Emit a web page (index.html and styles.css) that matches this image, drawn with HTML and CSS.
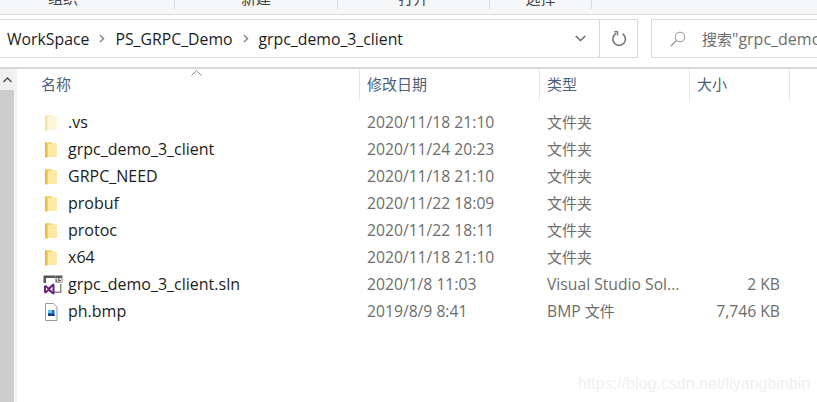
FILE: index.html
```html
<!DOCTYPE html>
<html lang="zh">
<head>
  <meta charset="UTF-8" />
  <title>grpc_demo_3_client</title>
  <link rel="stylesheet" href="styles.css">
</head>
<body>
  <svg class="defs" width="0" height="0">
    <symbol id="folder" viewBox="0 0 14 18">
      <path d="M1 1h6l1.5 1.500H13V16H1z" fill="#f6d873"/>
      <path d="M3.500 3H13v13H3.500z" fill="#fbe9a6"/>
      <path d="M1 1v15.500h2.500V3z" fill="#eeb93f"/>
    </symbol>
    <symbol id="folder-faded" viewBox="0 0 14 18">
      <path d="M1 1h6l1.500 1.500H13V16H1z" fill="#fbeec0"/>
      <path d="M3.500 3H13v13H3.500z" fill="#fdf6dc"/>
      <path d="M1 1v15.500h2.500V3z" fill="#f8e3a8"/>
    </symbol>
  </svg>

  <div class="ribbon">
    <div class="ribbon__group ribbon__group--first"><span>组织</span></div>
    <div class="ribbon__group ribbon__group--new"><span>新建</span></div>
    <div class="ribbon__group ribbon__group--open"><span>打开</span></div>
    <div class="ribbon__group ribbon__group--select"><span>选择</span></div>
  </div>

  <div class="navbar">
    <div class="address">
      <div class="crumbs">
        <span>WorkSpace</span>
        <svg class="crumbs__sep" width="6" height="9" viewBox="0 0 6 9"><path d="M1 1l3.500 3.500L1 8" fill="none" stroke="#8a8a8a" stroke-width="1.500"/></svg>
        <span>PS_GRPC_Demo</span>
        <svg class="crumbs__sep" width="6" height="9" viewBox="0 0 6 9"><path d="M1 1l3.500 3.500L1 8" fill="none" stroke="#8a8a8a" stroke-width="1.500"/></svg>
        <span>grpc_demo_3_client</span>
      </div>
      <div class="address__drop">
        <svg width="11" height="7" viewBox="0 0 11 7"><path d="M.7 1l4.800 4.500L10.300 1" fill="none" stroke="#6d6d6d" stroke-width="1.600"/></svg>
      </div>
      <div class="address__refresh">
        <svg width="16" height="16" viewBox="0 0 16 16"><path d="M5 2.600A6.300 6.300 0 1 0 11.600 2.800" fill="none" stroke="#7d7d7d" stroke-width="1.700"/><path d="M3.200 .8h3.300v3.600" fill="none" stroke="#7d7d7d" stroke-width="1.500"/></svg>
      </div>
    </div>
    <div class="search">
      <svg class="search__icon" width="16" height="16" viewBox="0 0 16 16"><circle cx="10" cy="6" r="4.800" fill="none" stroke="#8f8f8f"/><path d="M6.500 9.500L1 15" stroke="#8f8f8f" stroke-width="1.200"/></svg>
      <span class="search__text"><span class="cjk">搜索</span>"grpc_demo_3_client"</span>
    </div>
  </div>

  <div class="explorer">
    <div class="scrollbar">
      <div class="scrollbar__up">
        <svg width="9" height="6" viewBox="0 0 9 6"><path d="M.5 5l4-4 4 4" fill="none" stroke="#505050" stroke-width="1.500"/></svg>
      </div>
    </div>
    <div class="files">
      <div class="files__head">
        <svg class="files__sort" width="11" height="6" viewBox="0 0 11 6"><path d="M.5 5.500L5.500 .8l5 4.700" fill="none" stroke="#8a8a8a"/></svg>
        <div class="col col--name head">名称</div>
        <div class="col col--date head">修改日期</div>
        <div class="col col--type head">类型</div>
        <div class="col col--size head">大小</div>
      </div>
      <div class="files__list">
        <div class="row">
          <div class="col col--name"><svg class="icon"><use href="#folder-faded"/></svg>.vs</div>
          <div class="col col--date">2020/11/18 21:10</div><div class="col col--type cjk">文件夹</div><div class="col col--size"></div>
        </div>
        <div class="row">
          <div class="col col--name"><svg class="icon"><use href="#folder"/></svg>grpc_demo_3_client</div>
          <div class="col col--date">2020/11/24 20:23</div><div class="col col--type cjk">文件夹</div><div class="col col--size"></div>
        </div>
        <div class="row">
          <div class="col col--name"><svg class="icon"><use href="#folder"/></svg>GRPC_NEED</div>
          <div class="col col--date">2020/11/18 21:10</div><div class="col col--type cjk">文件夹</div><div class="col col--size"></div>
        </div>
        <div class="row">
          <div class="col col--name"><svg class="icon"><use href="#folder"/></svg>probuf</div>
          <div class="col col--date">2020/11/22 18:09</div><div class="col col--type cjk">文件夹</div><div class="col col--size"></div>
        </div>
        <div class="row">
          <div class="col col--name"><svg class="icon"><use href="#folder"/></svg>protoc</div>
          <div class="col col--date">2020/11/22 18:11</div><div class="col col--type cjk">文件夹</div><div class="col col--size"></div>
        </div>
        <div class="row">
          <div class="col col--name"><svg class="icon"><use href="#folder"/></svg>x64</div>
          <div class="col col--date">2020/11/18 21:10</div><div class="col col--type cjk">文件夹</div><div class="col col--size"></div>
        </div>
        <div class="row">
          <div class="col col--name">
            <svg class="icon icon--sln" viewBox="0 0 20 20">
              <path d="M.5 .5h12v2.500H3v5H.5z" fill="#555"/>
              <path d="M12.500 .5H19.500v7h-7z" fill="#5a5a5a"/>
              <text class="icon__badge" x="16" y="6.500">15</text>
              <path d="M18.500 9v9H11v-1.600h6V9z" fill="#8a8a8a"/>
              <path d="M1 11l2-1 2.500 2.500L10 8.500l1.500 1v9.500L10 19.500l-4.500-3.500L3 18.500l-2-1z" fill="#68217a"/>
              <path d="M3 12.500v3.500l1.600-1.700zM9.500 11.500L7 14.200l2.500 2.300z" fill="#fff"/>
            </svg>grpc_demo_3_client.sln
          </div>
          <div class="col col--date">2020/1/8 11:03</div><div class="col col--type">Visual Studio Sol...</div><div class="col col--size">2 KB</div>
        </div>
        <div class="row">
          <div class="col col--name">
            <svg class="icon" viewBox="0 0 18 18">
              <path d="M3.500 .5h8l3.500 3.500v13.500H3.500z" fill="#fff" stroke="#9a9a9a"/>
              <path d="M6 7h6.500v6H6z" fill="#1f6fc0"/>
              <path d="M6 7h4v3H6z" fill="#5cc1ee"/>
              <path d="M6 11h6.500v2H6z" fill="#12407d"/>
            </svg>ph.bmp
          </div>
          <div class="col col--date">2019/8/9 8:41</div><div class="col col--type">BMP <span class="cjk">文件</span></div><div class="col col--size">7,746 KB</div>
        </div>
      </div>
    </div>
  </div>

  <div class="watermark">https://blog.csdn.net/liyangbinbin</div>
</body>
</html>
```

FILE: styles.css
```css
body {
  margin: 0;
  height: 402px;
  overflow: hidden;
  position: relative;
  background-color: #fff;
  font-family: "Open Sans", "Noto Sans CJK SC", sans-serif;
  font-size: 16px;
  color: #1c1c1c;
}

.cjk {
  font-size: 15px;
}

.defs {
  position: absolute;
}

.ribbon {
  display: flex;
  height: 13px;
  padding-bottom: 1px;
  background-color: #f5f6f7;
  border-bottom: 1px solid #dadbdc;
  overflow: hidden;
  font-size: 15px;
  color: #444;
}

.ribbon__group {
  height: 9px;
  border-right: 1px solid #dadbdc;
  text-align: center;
  overflow: hidden;
}

.ribbon__group span {
  display: block;
  margin-top: -13px;
  line-height: 22px;
}

.ribbon__group--first {
  width: 126px;
  padding-left: 48px;
  text-align: left;
}

.ribbon__group--new { width: 162px; }
.ribbon__group--open { width: 151px; }
.ribbon__group--select { width: 101px; }

.navbar {
  display: flex;
  gap: 13px;
  height: 39px;
  margin-top: 4px;
  padding-bottom: 9px;
  border-bottom: 2px solid #d9d9d9;
}

.address {
  display: flex;
  width: 638px;
  height: 39px;
  box-sizing: border-box;
  border: 1px solid #d9d9d9;
  border-width: 1px 1px 1px 0;
}

.crumbs {
  flex: 1;
  display: flex;
  align-items: center;
  gap: 10px;
  padding-left: 7px;
  font-size: 15.8px;
}

.address__drop {
  width: 38px;
  display: flex;
  align-items: center;
  justify-content: center;
}

.address__refresh {
  width: 37px;
  display: flex;
  align-items: center;
  justify-content: center;
  border-left: 1px solid #d9d9d9;
}

.search {
  flex: 1;
  display: flex;
  align-items: center;
  height: 39px;
  box-sizing: border-box;
  border: 1px solid #d9d9d9;
  border-right: none;
  padding-left: 18px;
  overflow: hidden;
  white-space: nowrap;
  color: #6d6d6d;
}

.search__icon {
  flex: none;
}

.search__text {
  margin-left: 16px;
}

.explorer {
  display: flex;
  height: 334px;
}

.scrollbar {
  width: 14px;
  background-color: #cdcdcd;
  border-right: 3px solid #f3f3f3;
}

.scrollbar__up {
  height: 21px;
  background-color: #f0f0f0;
  display: flex;
  justify-content: center;
  padding-top: 8px;
  box-sizing: border-box;
}

.files {
  flex: 1;
  position: relative;
}

.files__head {
  display: flex;
  height: 32px;
}

.files__sort {
  position: absolute;
  left: 174px;
  top: 1px;
}

.col {
  box-sizing: border-box;
  padding-left: 7px;
  white-space: nowrap;
}

.col--name {
  width: 343px;
  padding-left: 28px;
  display: flex;
  align-items: center;
}

.col--date {
  width: 180px;
  font-size: 15.7px;
}

.col--type {
  width: 150px;
  font-size: 15.7px;
}

.col--size {
  width: 100px;
  font-size: 15.7px;
}

.head {
  height: 32px;
  line-height: 30px;
  font-size: 15px;
  color: #4c607a;
  border-right: 1px solid #e5e5e5;
}

.head.col--name {
  display: block;
  padding-left: 24px;
}

.files__list {
  padding-top: 8px;
}

.row {
  display: flex;
  height: 27px;
  line-height: 27px;
}

.row .col--date,
.row .col--type,
.row .col--size {
  color: #6d6d6d;
}

.row .col--type.cjk,
.row .col--type .cjk {
  font-size: 15px;
}

.row .col--size {
  padding: 0 10px 0 0;
  text-align: right;
}

.icon {
  flex: none;
  width: 18px;
  height: 18px;
  margin-right: 8px;
  margin-left: -3px;
}

.icon--sln {
  width: 20px;
  height: 20px;
  margin-right: 5px;
  margin-left: -2px;
}

.icon__badge {
  fill: #fff;
  font-size: 6px;
  font-weight: 700;
  text-anchor: middle;
}

.watermark {
  position: absolute;
  left: 578px;
  top: 375px;
  font-family: "Liberation Sans", sans-serif;
  font-size: 16px;
  color: #f0f0f0;
}
```
